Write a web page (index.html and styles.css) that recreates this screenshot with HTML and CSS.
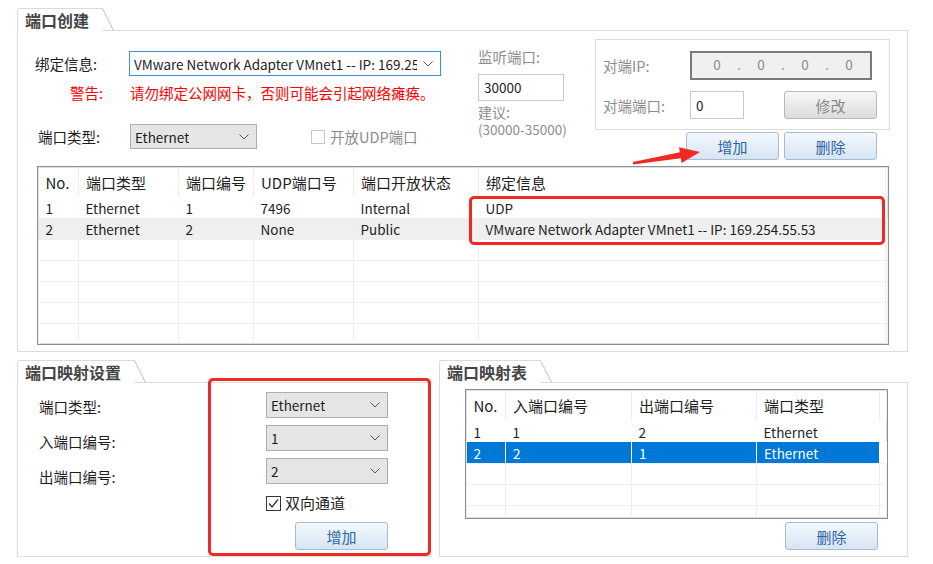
FILE: index.html
```
<!DOCTYPE html>
<html>
<head>
  <meta charset="utf-8">
  <title>端口创建</title>
  <link rel="stylesheet" href="styles.css">
</head>
<body>
  <div class="page">
    <div class="group group-create">
      <div class="tab">端口创建</div>
      <div class="box">
        <div class="create-top">
          <div class="bind-col">
            <div class="row">
              <span class="lbl">绑定信息:</span>
              <div class="combo combo-focus combo-bind">
                <span class="combo-text">VMware Network Adapter VMnet1 -- IP: 169.25</span>
                <svg class="chev" width="10" height="6" viewBox="0 0 10 6"><polyline points="0.5,0.5 5,5 9.5,0.5" fill="none" stroke="#555" stroke-width="1"/></svg>
              </div>
            </div>
            <div class="row warn">
              <span class="warn-lbl">警告:</span>
              <span class="warn-msg">请勿绑定公网网卡，否则可能会引起网络瘫痪。</span>
            </div>
            <div class="row row-type">
              <span class="lbl">端口类型:</span>
              <div class="combo combo-type">
                <span class="combo-text">Ethernet</span>
                <svg class="chev" width="10" height="6" viewBox="0 0 10 6"><polyline points="0.5,0.5 5,5 9.5,0.5" fill="none" stroke="#555" stroke-width="1"/></svg>
              </div>
              <label class="check check-off"><span class="tick"></span>开放UDP端口</label>
            </div>
          </div>

          <div class="listen-col">
            <div class="listen-lbl">监听端口:</div>
            <div class="field field-listen">30000</div>
            <div class="hint">建议:</div>
            <div class="hint hint-range">(30000-35000)</div>
          </div>

          <div class="peer-col">
            <div class="peer-frame">
              <div class="peer-row">
                <span class="peer-lbl">对端IP:</span>
                <div class="ipbox">
                  <span>0</span><span>.</span><span>0</span><span>.</span><span>0</span><span>.</span><span>0</span>
                </div>
              </div>
              <div class="peer-row peer-row2">
                <span class="peer-lbl">对端端口:</span>
                <div class="field field-port">0</div>
                <div class="btn btn-off btn-edit">修改</div>
              </div>
            </div>
            <div class="btn-row">
              <div class="btn">增加</div>
              <div class="btn">删除</div>
            </div>
          </div>
        </div>

        <div class="list-wrap list-ports">
          <table class="list">
            <colgroup>
              <col style="width:40px"><col style="width:100px"><col style="width:75px"><col style="width:100px"><col style="width:125px"><col style="width:407px"><col>
            </colgroup>
            <tr class="head"><th>No.</th><th>端口类型</th><th>端口编号</th><th>UDP端口号</th><th>端口开放状态</th><th>绑定信息</th><th></th></tr>
            <tr class="data"><td>1</td><td>Ethernet</td><td>1</td><td>7496</td><td>Internal</td><td>UDP</td><td></td></tr>
            <tr class="data alt"><td>2</td><td>Ethernet</td><td>2</td><td>None</td><td>Public</td><td>VMware Network Adapter VMnet1 -- IP: 169.254.55.53</td><td></td></tr>
            <tr class="fill"><td></td><td></td><td></td><td></td><td></td><td></td><td></td></tr>
            <tr class="fill"><td></td><td></td><td></td><td></td><td></td><td></td><td></td></tr>
            <tr class="fill"><td></td><td></td><td></td><td></td><td></td><td></td><td></td></tr>
            <tr class="fill"><td></td><td></td><td></td><td></td><td></td><td></td><td></td></tr>
            <tr class="fill"><td></td><td></td><td></td><td></td><td></td><td></td><td></td></tr>
          </table>
        </div>
      </div>
    </div>

    <div class="bottom-row">
      <div class="group group-map">
        <div class="tab">端口映射设置</div>
        <div class="box">
          <div class="map-form">
            <div class="map-labels">
              <div>端口类型:</div>
              <div>入端口编号:</div>
              <div>出端口编号:</div>
            </div>
            <div class="map-controls">
              <div class="combo">
                <span class="combo-text">Ethernet</span>
                <svg class="chev" width="10" height="6" viewBox="0 0 10 6"><polyline points="0.5,0.5 5,5 9.5,0.5" fill="none" stroke="#555" stroke-width="1"/></svg>
              </div>
              <div class="combo">
                <span class="combo-text">1</span>
                <svg class="chev" width="10" height="6" viewBox="0 0 10 6"><polyline points="0.5,0.5 5,5 9.5,0.5" fill="none" stroke="#555" stroke-width="1"/></svg>
              </div>
              <div class="combo">
                <span class="combo-text">2</span>
                <svg class="chev" width="10" height="6" viewBox="0 0 10 6"><polyline points="0.5,0.5 5,5 9.5,0.5" fill="none" stroke="#555" stroke-width="1"/></svg>
              </div>
              <label class="check check-on">
                <span class="tick"><svg width="13" height="13" viewBox="0 0 13 13"><polyline points="2,6.5 5,10 11,2.5" fill="none" stroke="#333" stroke-width="1.3"/></svg></span>双向通道
              </label>
              <div class="btn btn-map-add">增加</div>
            </div>
          </div>
        </div>
      </div>

      <div class="group group-table">
        <div class="tab">端口映射表</div>
        <div class="box">
          <div class="list-wrap list-map">
            <table class="list">
              <colgroup>
                <col style="width:39px"><col style="width:126px"><col style="width:125px"><col style="width:123px"><col>
              </colgroup>
              <tr class="head"><th>No.</th><th>入端口编号</th><th>出端口编号</th><th>端口类型</th><th></th></tr>
              <tr class="data"><td>1</td><td>1</td><td>2</td><td>Ethernet</td><td></td></tr>
              <tr class="data sel"><td>2</td><td>2</td><td>1</td><td>Ethernet</td><td class="nosel"></td></tr>
              <tr class="fill"><td></td><td></td><td></td><td></td><td></td></tr>
              <tr class="fill"><td></td><td></td><td></td><td></td><td></td></tr>
              <tr class="fill"><td></td><td></td><td></td><td></td><td></td></tr>
            </table>
          </div>
          <div class="btn-row btn-row-end">
            <div class="btn">删除</div>
          </div>
        </div>
      </div>
    </div>
  </div>

  <!-- annotations drawn over the screenshot -->
  <div class="mark mark-bind"></div>
  <div class="mark mark-map"></div>
  <svg class="arrow" width="80" height="30" viewBox="625 142 80 30">
    <polygon points="632.8,162 679.8,152.2 679,147.3 700,152 681.6,163.1 680.8,158.2 633.2,164.5" fill="#ee2a22"/>
  </svg>
</body>
</html>
```

FILE: styles.css
```
body {
  margin: 0;
  background: #fff;
  font-family: "Noto Sans CJK SC", "Noto Sans", sans-serif;
  font-size: 14.5px;
  color: #1e1e1e;
}

.page {
  padding: 8px 0 0 17px;
}

/* group boxes with the little tab on top */
.group {
  display: flex;
  flex-direction: column;
  align-items: flex-start;
}
.tab {
  position: relative;
  z-index: 1;
  height: 23px;
  margin-bottom: -1px;
  padding: 0 13px 0 7px;
  box-sizing: border-box;
  background: #fff;
  border: 1px solid #dadada;
  border-right: 0;
  border-bottom: 0;
  border-radius: 3px 0 0 0;
  font-size: 16px;
  font-weight: bold;
  line-height: 23px;
  color: #454545;
}
.tab::after {
  content: "";
  position: absolute;
  top: -1px;
  right: -12px;
  width: 12px;
  height: 23px;
  background: linear-gradient(to top right, transparent calc(50% - 0.7px), #d6d6d6 calc(50% - 0.7px), #d6d6d6 calc(50% + 0.7px), transparent calc(50% + 0.7px));
}
.box {
  border: 1px solid #dcdcdc;
  box-sizing: border-box;
  background: #fff;
}
.group-create .box {
  width: 891px;
  height: 322px;
}

/* top form */
.create-top {
  display: flex;
  align-items: flex-start;
}
.bind-col {
  width: 443px;
  margin-left: 17px;
  padding-top: 20px;
}
.row {
  display: flex;
  align-items: center;
}
.lbl {
  width: 94px;
}
.combo {
  display: flex;
  align-items: center;
  justify-content: space-between;
  height: 26px;
  padding: 0 7px 0 4px;
  box-sizing: border-box;
  background: #e5e5e5;
  border: 1px solid #adadad;
  font-size: 13.5px;
}
.combo-text {
  white-space: nowrap;
  overflow: hidden;
}
.combo-focus {
  background: #fff;
  border-color: #3c8ce0;
}
.combo-bind {
  width: 312px;
  height: 25px;
}
.combo-bind .combo-text {
  width: 283px;
}
.warn {
  margin-top: 7px;
  height: 18px;
  color: #f00;
}
.warn-lbl {
  width: 68px;
  text-align: right;
}
.warn-msg {
  margin-left: 27px;
}
.row-type {
  margin-top: 23px;
}
.row-type .lbl {
  width: 92px;
  padding-left: 3px;
}
.combo-type {
  width: 127px;
  height: 25px;
}

.check {
  display: flex;
  align-items: center;
  gap: 5px;
}
.tick {
  display: flex;
  align-items: center;
  justify-content: center;
  width: 14px;
  height: 14px;
  box-sizing: border-box;
  background: #fff;
}
.check-off {
  margin-left: 54px;
  color: #8d8d8d;
}
.check-off .tick {
  border: 1px solid #c6c6c6;
}
.check-on {
  margin-top: 11px;
  gap: 4px;
  font-size: 15px;
  line-height: 16px;
}
.check-on .tick {
  width: 15px;
  height: 15px;
  border: 1px solid #333;
}

.listen-col {
  width: 117px;
  padding-top: 17px;
  color: #8d8d8d;
}
.listen-lbl {
  line-height: 18px;
}
.field {
  height: 28px;
  padding-left: 5px;
  box-sizing: border-box;
  border: 1px solid #c8c8c8;
  background: #fff;
  color: #1e1e1e;
  font-size: 13.5px;
  line-height: 26px;
}
.field-listen {
  width: 86px;
  height: 27px;
  margin-top: 8px;
  line-height: 25px;
}
.hint {
  font-size: 14px;
  line-height: 17px;
}
.field-listen + .hint {
  margin-top: 3px;
}
.hint-range {
  font-size: 13.5px;
}

.peer-col {
  width: 295px;
}
.peer-frame {
  margin-top: 8px;
  height: 91px;
  padding: 11px 0 0 7px;
  box-sizing: border-box;
  border: 1px solid #dcdcdc;
}
.peer-row {
  display: flex;
  align-items: center;
}
.peer-row2 {
  margin-top: 11px;
}
.peer-lbl {
  width: 87px;
  color: #8d8d8d;
}
.ipbox {
  display: flex;
  width: 182px;
  height: 29px;
  padding-left: 14px;
  box-sizing: border-box;
  border: 2px solid #7a7a7a;
  background: #f0f0f0;
  color: #8a8a9c;
  font-size: 13.5px;
  line-height: 23px;
}
.ipbox span {
  width: 22px;
  text-align: center;
}
.field-port {
  width: 54px;
}
.btn-edit {
  margin-left: 40px;
}

.btn {
  display: flex;
  align-items: center;
  justify-content: center;
  width: 93px;
  height: 28px;
  box-sizing: border-box;
  border: 1px solid #a8bbd0;
  border-radius: 3px;
  background: linear-gradient(#f4f8fd, #d6e5f3);
  color: #2d66a8;
  font-size: 15px;
}
.btn-off {
  border-color: #b9b9b9;
  background: linear-gradient(#f7f7f7, #dcdcdc);
  color: #8a8a8a;
}
.btn-row {
  display: flex;
  gap: 5px;
  margin: 2px 0 0 91px;
}

/* list views */
.list-wrap {
  overflow: hidden;
  box-sizing: border-box;
  border: 1px solid #8e8e8e;
  box-shadow: inset 0 0 0 1px #dedede;
}
.list-ports {
  width: 852px;
  height: 179px;
  margin: 6px 0 0 19px;
}
.list {
  width: 100%;
  table-layout: fixed;
  border-collapse: collapse;
}
.list th,
.list td {
  padding: 0 0 0 7px;
  text-align: left;
  white-space: nowrap;
  overflow: hidden;
  font-weight: normal;
}
.list .head th {
  height: 30px;
  font-size: 15px;
  border-right: 1px solid #ededed;
}
.list .data td {
  height: 21px;
  font-size: 13.5px;
}
.list .alt td {
  background: #efefef;
}
.list .sel td {
  background: #0078d7;
  color: #fff;
  border-right: 1px solid #fff;
}
.list .sel td.nosel {
  background: #fff;
}
.list .fill td {
  height: 20px;
  border: 1px solid #efefef;
}

/* bottom groups */
.bottom-row {
  display: flex;
  gap: 9px;
  margin-top: 8px;
}
.group-map .box {
  width: 413px;
  height: 175px;
}
.group-table .box {
  width: 469px;
  height: 175px;
}

.map-form {
  display: flex;
}
.map-labels {
  width: 227px;
  margin-left: 21px;
  padding-top: 6px;
}
.map-labels div {
  height: 35px;
  line-height: 35px;
}
.map-controls {
  width: 122px;
  padding-top: 9px;
}
.map-controls .combo {
  margin-bottom: 7px;
}
.btn-map-add {
  margin: 11px 0 0 29px;
}

.list-map {
  width: 423px;
  height: 130px;
  margin: 6px 0 0 25px;
}
.list-map .head th {
  height: 31px;
}
.btn-row-end {
  justify-content: flex-end;
  margin: 3px 29px 0 0;
}

/* red annotations */
.mark {
  position: absolute;
  box-sizing: border-box;
  border: 3px solid #ee2a22;
  border-radius: 5px;
}
.mark-bind {
  left: 469px;
  top: 196px;
  width: 416px;
  height: 49px;
}
.mark-map {
  left: 208px;
  top: 378px;
  width: 223px;
  height: 178px;
}
.arrow {
  position: absolute;
  left: 625px;
  top: 142px;
}
```
